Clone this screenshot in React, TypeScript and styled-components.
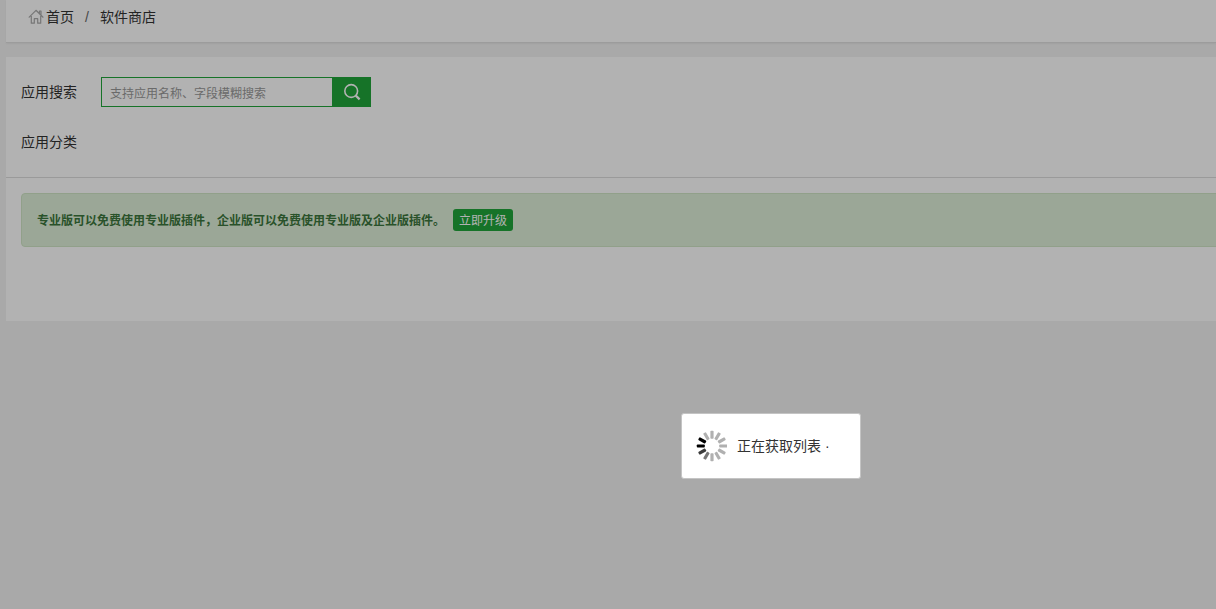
import React from "react";
import styled, { createGlobalStyle } from "styled-components";

const GlobalStyle = createGlobalStyle`
  *, *::before, *::after { box-sizing: border-box; }
  html, body { margin: 0; min-height: 100%; }
  body {
    background: #f3f3f3;
    color: #333;
    font: 14px/20px "Liberation Sans", "Noto Sans CJK SC", sans-serif;
    overflow-x: hidden;
  }
  button, input { font-family: "Noto Sans CJK SC", sans-serif; margin: 0; }
`;

const Page = styled.main`
  display: flex;
  flex-direction: column;
  gap: 14px;
  padding-left: 6px;
`;

const Breadcrumb = styled.nav`
  display: flex;
  align-items: center;
  padding: 7px 22px 15px;
  background: #fff;
  border-bottom: 1px solid #e0e0e0;
  box-shadow: 0 1px 2px rgba(0, 0, 0, 0.06);
`;

const Crumb = styled.a`
  display: flex;
  align-items: center;
  gap: 2px;
  color: #333;
  text-decoration: none;
`;

const Separator = styled.span`
  width: 26px;
  color: #666;
  text-align: center;
`;

const Panel = styled.section`
  background: #fff;
  min-height: 264px;
`;

const Filters = styled.form`
  display: flex;
  flex-direction: column;
  gap: 20px;
  padding: 20px 15px;
  border-bottom: 1px solid #ddd;
`;

const FilterRow = styled.div`
  display: flex;
  align-items: center;
  height: 30px;
`;

const FilterLabel = styled.label`
  width: 80px;
`;

const SearchInput = styled.input`
  width: 231px;
  height: 30px;
  padding: 0 8px;
  border: 1px solid #20a53a;
  border-right: 0;
  border-radius: 0;
  background: #fff;
  color: #333;
  font-size: 12px;
  outline: 0;
  &::placeholder { color: #999; opacity: 1; }
`;

const SearchButton = styled.button`
  display: flex;
  align-items: center;
  justify-content: center;
  width: 39px;
  height: 30px;
  padding: 0;
  border: 0;
  background: #20a53a;
  color: #fff;
`;

const Notice = styled.div`
  display: flex;
  align-items: center;
  gap: 8px;
  height: 54px;
  margin: 15px -6px 0 15px;
  padding: 0 15px;
  border: 1px solid #d0e6c6;
  border-radius: 4px;
  background: #dff0d8;
  color: #3c763d;
  font-family: "Noto Sans CJK SC", sans-serif;
  font-size: 12px;
  white-space: nowrap;
`;

const UpgradeButton = styled.button`
  height: 22px;
  padding: 0 6px;
  border: 0;
  border-radius: 3px;
  background: #20a53a;
  color: #fff;
  font-size: 12px;
  line-height: 22px;
`;

const Shade = styled.div`
  position: fixed;
  inset: 0;
  background: rgba(0, 0, 0, 0.3);
`;

const LoadingBox = styled.div`
  position: fixed;
  top: calc(50% + 108px);
  left: calc(50% + 73px);
  display: flex;
  align-items: center;
  gap: 10px;
  width: 180px;
  height: 66px;
  padding: 0 14px;
  border: 1px solid #c4c4c4;
  border-radius: 3px;
  background: #fff;
  white-space: nowrap;
`;

const HomeIcon = () => (
  <svg width="16" height="16" viewBox="0 0 16 16" fill="none" stroke="#aaa" strokeWidth="1.2" aria-hidden="true">
    <path d="M1.2 8.2 8 1.3l7 6.9M11.5 4.3V2H13v3.8M3.3 7.3v6.9h3V9.7h3.4v4.5h3V7.3" strokeLinejoin="round" strokeLinecap="round" />
  </svg>
);

const SearchIcon = () => (
  <svg width="18" height="18" viewBox="0 0 18 18" fill="none" stroke="currentColor" aria-hidden="true">
    <circle cx="8.2" cy="8" r="6.4" strokeWidth="1.6" />
    <path d="m12.8 12.6 3.8 3.8" strokeWidth="2.2" />
  </svg>
);

const SPOKES = ["#b0b0b0", "#b0b0b0", "#b0b0b0", "#b0b0b0", "#b0b0b0", "#b0b0b0", "#b0b0b0", "#777", "#3c3c3c", "#000", "#000", "#b0b0b0"];

const Spinner = () => (
  <svg width="31" height="32" viewBox="-16 -16 31 32" aria-hidden="true">
    {SPOKES.map((color, i) => (
      <rect key={i} x="-1.6" y="-15.2" width="3.2" height="8" rx="0.8" fill={color} transform={`rotate(${i * 30})`} />
    ))}
  </svg>
);

export default function App() {
  return (
    <>
      <GlobalStyle />
      <Page>
        <Breadcrumb aria-label="面包屑">
          <Crumb href="#home"><HomeIcon />首页</Crumb>
          <Separator>/</Separator>
          <Crumb href="#store">软件商店</Crumb>
        </Breadcrumb>
        <Panel>
          <Filters onSubmit={(e) => e.preventDefault()}>
            <FilterRow>
              <FilterLabel htmlFor="app-search">应用搜索</FilterLabel>
              <SearchInput id="app-search" type="text" placeholder="支持应用名称、字段模糊搜索" />
              <SearchButton type="submit" aria-label="搜索"><SearchIcon /></SearchButton>
            </FilterRow>
            <FilterRow>应用分类</FilterRow>
          </Filters>
          <Notice>
            <strong>专业版可以免费使用专业版插件，企业版可以免费使用专业版及企业版插件。</strong>
            <UpgradeButton type="button">立即升级</UpgradeButton>
          </Notice>
        </Panel>
      </Page>
      <Shade />
      <LoadingBox role="status">
        <Spinner />
        <span>正在获取列表 ·</span>
      </LoadingBox>
    </>
  );
}
